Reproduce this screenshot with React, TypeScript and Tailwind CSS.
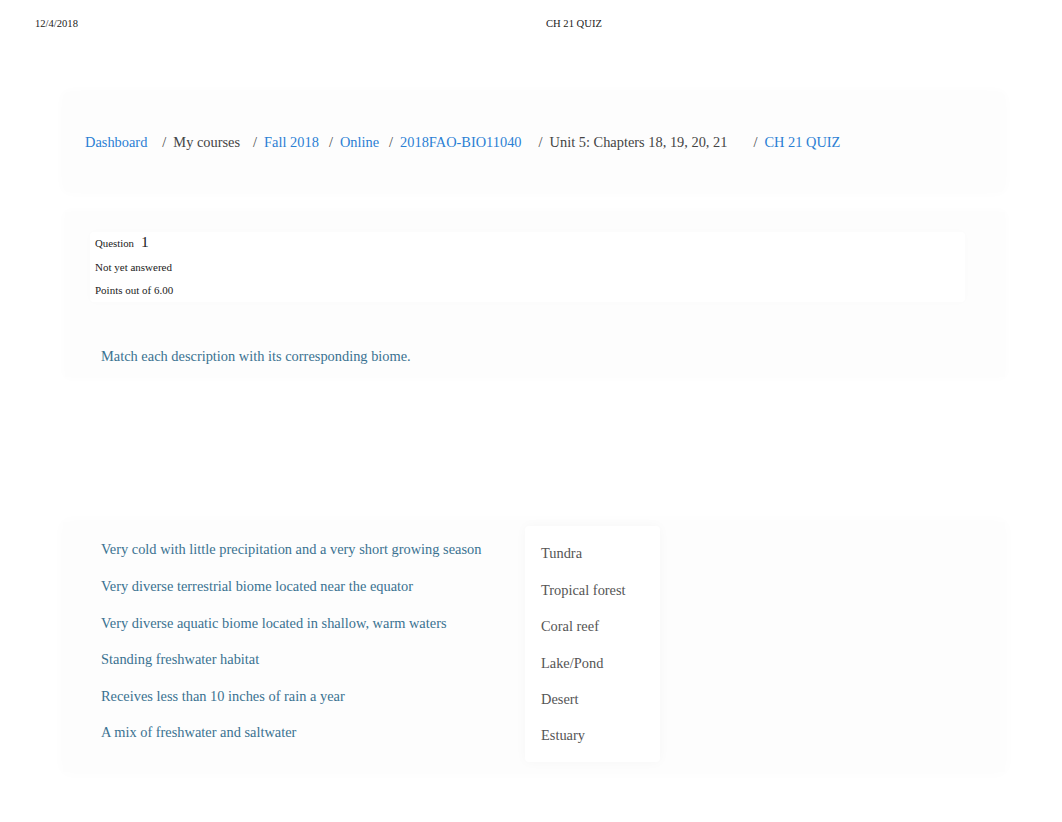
import React from "react";

const crumbs: { label: string; link: boolean }[] = [
  { label: "Dashboard", link: true },
  { label: "My courses", link: false },
  { label: "Fall 2018", link: true },
  { label: "Online", link: true },
  { label: "2018FAO-BIO11040", link: true },
  { label: "Unit 5: Chapters 18, 19, 20, 21", link: false },
  { label: "CH 21 QUIZ", link: true },
];

const rows = [
  ["Very cold with little precipitation and a very short growing season", "Tundra"],
  ["Very diverse terrestrial biome located near the equator", "Tropical forest"],
  ["Very diverse aquatic biome located in shallow, warm waters", "Coral reef"],
  ["Standing freshwater habitat", "Lake/Pond"],
  ["Receives less than 10 inches of rain a year", "Desert"],
  ["A mix of freshwater and saltwater", "Estuary"],
];

// gaps after each crumb before the next "/" (matches the print layout)
const sepGaps = ["ml-[15px]", "ml-[13px]", "ml-[10px]", "ml-[10px]", "ml-[17px]", "ml-[26px]"];

export default function App() {
  return (
    <div className="w-[1062px] h-[822px] bg-white overflow-hidden font-['Liberation_Serif',serif] text-[#333]">
      {/* print header */}
      <div className="flex h-[48px] items-center px-[35px] text-[10.6px] text-[#222]">
        <span className="w-[511px]">12/4/2018</span>
        <span>CH 21 QUIZ</span>
      </div>

      {/* breadcrumb card */}
      <div className="mt-[44px] ml-[63px] w-[942px] h-[100px] bg-[#fdfdfd] rounded-[6px] shadow-[0_0_12px_rgba(0,0,0,0.02)] flex items-center px-[22px] pt-[2px] text-[14.4px]">
        {crumbs.map((c, i) => (
          <React.Fragment key={c.label}>
            {i > 0 && (
              <span className={`${sepGaps[i - 1]} mr-[7px] text-[#444]`}>/</span>
            )}
            <span className={c.link ? "text-[#2b7fd4]" : "text-[#444]"}>{c.label}</span>
          </React.Fragment>
        ))}
      </div>

      {/* question info + prompt */}
      <div className="mt-[20px] ml-[65px] w-[940px] h-[165px] bg-[#fdfdfd] shadow-[0_0_10px_rgba(0,0,0,0.02)] pt-[20px] flex flex-col">
        <div className="ml-[25px] mr-[40px] h-[70px] bg-white rounded-[4px] shadow-[0_0_8px_rgba(0,0,0,0.015)] pl-[5px] flex flex-col">
          <div className="flex items-baseline gap-[7px] h-[28px] -mt-[2px]">
            <span className="text-[10.8px] text-[#222]">Question</span>
            <span className="text-[15.5px] text-[#222]">1</span>
          </div>
          <div className="text-[11px] text-[#222] h-[23px] leading-[23px]">Not yet answered</div>
          <div className="text-[11px] text-[#222] h-[23px] leading-[23px]">Points out of 6.00</div>
        </div>
        <div className="mt-[44px] ml-[36px] text-[14.4px] text-[#3a7291]">
          Match each description with its corresponding biome.
        </div>
      </div>

      {/* matching */}
      <div className="mt-[145px] ml-[63px] w-[942px] h-[250px] bg-[#fdfdfd] shadow-[0_0_14px_rgba(0,0,0,0.02)] flex pt-[10px]">
        <div className="w-[462px] pl-[38px] flex flex-col">
          {rows.map(([d]) => (
            <div key={d} className="h-[36.6px] flex items-center text-[14.4px] text-[#3a7291]">
              {d}
            </div>
          ))}
        </div>
        <div className="w-[135px] bg-white rounded-[4px] shadow-[0_0_12px_rgba(0,0,0,0.03)] pl-[16px] pt-[10px] -mt-[6px] h-[236px]">
          {rows.map(([, b]) => (
            <div key={b} className="h-[36.4px] flex items-center text-[14.4px] text-[#555]">
              {b}
            </div>
          ))}
        </div>
      </div>
    </div>
  );
}
